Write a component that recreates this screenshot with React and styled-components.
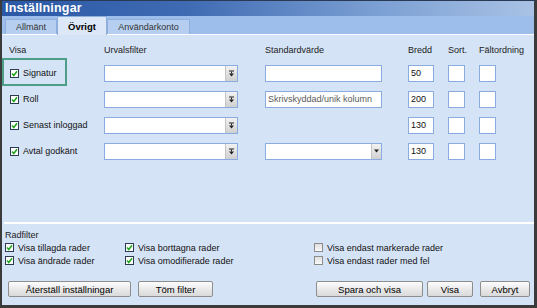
import React from 'react';
import styled, { createGlobalStyle } from 'styled-components';

const GlobalStyle = createGlobalStyle`
  body { margin: 0; font-family: "Liberation Sans", Arial, sans-serif; }
`;

const fields = [
  { name: 'Signatur', value: '50', focus: true, std: 'input' },
  { name: 'Roll', value: '200', std: 'readonly' },
  { name: 'Senast inloggad', value: '130', std: 'none' },
  { name: 'Avtal godkänt', value: '130', std: 'select' },
];

const rowFilters = [
  { label: 'Visa tillagda rader', checked: true },
  { label: 'Visa borttagna rader', checked: true },
  { label: 'Visa endast markerade rader', checked: false },
  { label: 'Visa ändrade rader', checked: true },
  { label: 'Visa omodifierade rader', checked: true },
  { label: 'Visa endast rader med fel', checked: false },
];

const Window = styled.div`
  width: 537px;
  height: 308px;
  box-sizing: border-box;
  border-left: 2px solid #3b3b3b;
  border-right: 3px solid #3b3b3b;
  border-bottom: 3px solid #3b3b3b;
  border-top: 1px solid #2a3a55;
  background: #d5e3f6;
  display: flex;
  flex-direction: column;
  font-size: 9px;
  color: #111;
`;

const TitleBar = styled.div`
  height: 15px;
  line-height: 15px;
  padding-left: 3px;
  background: linear-gradient(90deg, #2b58a6 0%, #3f6bb3 35%, #7a9fd3 70%, #a9c2e5 100%);
  color: #fff;
  font-weight: bold;
  font-size: 12.5px;
  letter-spacing: 0.2px;
`;

const TabStrip = styled.div`
  height: 18px;
  background: #9dbeea;
  border-bottom: 1px solid #ffffff;
  display: flex;
  align-items: flex-end;
  padding-left: 1px;
`;

const Tab = styled.div`
  height: ${p => (p.$active ? '19px' : '15px')};
  line-height: ${p => (p.$active ? '19px' : '15px')};
  width: ${p => p.$w}px;
  box-sizing: border-box;
  text-align: center;
  background: ${p => (p.$active ? '#dce8f7' : '#b6cff0')};
  border: 1px solid #8eaedb;
  border-bottom: none;
  font-weight: ${p => (p.$active ? 'bold' : 'normal')};
  font-size: ${p => (p.$active ? '9.5px' : '9px')};
  color: ${p => (p.$active ? '#000' : '#333')};
  margin-bottom: ${p => (p.$active ? '-1px' : '0')};
  position: relative;
`;

const Content = styled.div`
  flex: 1;
  display: flex;
  flex-direction: column;
`;

const FieldGrid = styled.div`
  display: grid;
  grid-template-columns: 95px 161px 143px 40px 31px auto;
  grid-template-rows: 20px;
  grid-auto-rows: 26px;
  align-items: center;
  padding: 5px 0 0 7px;
`;

const HeadCell = styled.div`
  color: #222;
`;

const Cell = styled.div`
  display: flex;
  align-items: center;
`;

const CheckLabel = styled.label`
  display: flex;
  align-items: center;
  gap: 4px;
  padding-left: 1px;
  position: relative;
  color: #111;
  &::before {
    content: '';
    display: ${p => (p.$focus ? 'block' : 'none')};
    position: absolute;
    left: -7px;
    top: -10px;
    right: -10px;
    bottom: -8px;
    border: 2px solid #4f9e88;
  }
`;

const Box = styled.span`
  width: 9px;
  height: 9px;
  box-sizing: border-box;
  border: 1px solid ${p => (p.$checked ? '#2d3b52' : '#8c8c8c')};
  background: ${p => (p.$checked ? '#fff' : 'linear-gradient(#dedede, #fafafa)')};
  display: inline-flex;
  align-items: center;
  justify-content: center;
  flex: none;
`;

const Field = styled.div`
  width: ${p => p.$w}px;
  height: 17px;
  box-sizing: border-box;
  border: 1px solid #89abdf;
  background: #fff;
  display: flex;
  align-items: center;
  padding-left: ${p => (p.$pad ? 2 : 0)}px;
  color: ${p => (p.$muted ? '#5a5a5a' : '#111')};
  overflow: hidden;
  white-space: nowrap;
`;

const DropButton = styled.span`
  margin-left: auto;
  width: ${p => p.$w}px;
  height: 15px;
  background: linear-gradient(#f2f2f2, #d0d0d0);
  border-left: 1px solid #c4c4c4;
  display: flex;
  align-items: center;
  justify-content: center;
`;

const Spacer = styled.div`
  flex: 1;
`;

const Separator = styled.div`
  height: 2px;
  background: #fff;
  margin-left: 2px;
`;

const FilterSection = styled.div`
  padding: 6px 0 0 3px;
`;

const SectionTitle = styled.div`
  height: 11px;
  line-height: 11px;
  color: #222;
`;

const FilterGrid = styled.div`
  display: grid;
  grid-template-columns: 120px 189px auto;
  grid-auto-rows: 13px;
  align-items: center;
`;

const FilterItem = styled.label`
  display: flex;
  align-items: center;
  gap: 4px;
  color: #111;
`;

const ButtonBar = styled.div`
  display: flex;
  align-items: center;
  padding: 14px 4px 8px 6px;
`;

const Button = styled.button`
  width: ${p => p.$w}px;
  height: 16px;
  margin-left: ${p => p.$ml || 0}px;
  padding: 0;
  box-sizing: border-box;
  border: 1px solid #8d8d8d;
  border-radius: 2px;
  background: linear-gradient(#fdfdfd, #e6e6e6 60%, #dadada);
  font-family: "Liberation Sans", Arial, sans-serif;
  font-size: 9.5px;
  color: #000;
`;

const CheckMark = () => (
  <svg width="7" height="7" viewBox="0 0 7 7">
    <polyline points="1,3.5 2.8,5.5 6,1.2" fill="none" stroke="#23a51f" strokeWidth="1.6" />
  </svg>
);

const CheckBox = ({ checked }) => <Box $checked={checked}>{checked && <CheckMark />}</Box>;

const ArrowToEnd = () => (
  <svg width="7" height="7" viewBox="0 0 7 7">
    <rect x="1" y="0.5" width="5" height="1" fill="#222" />
    <rect x="3" y="1.5" width="1" height="2" fill="#222" />
    <polygon points="1,3.5 6,3.5 3.5,6.5" fill="#222" />
  </svg>
);

const Arrow = () => (
  <svg width="5" height="4" viewBox="0 0 5 4">
    <polygon points="0,0.5 5,0.5 2.5,3.5" fill="#222" />
  </svg>
);

const Select = ({ w, small }) => (
  <Field $w={w}>
    <DropButton $w={small ? 9 : 11}>{small ? <Arrow /> : <ArrowToEnd />}</DropButton>
  </Field>
);

const App = () => {
  return (
    <Window>
      <GlobalStyle />
      <TitleBar>Inställningar</TitleBar>
      <TabStrip>
        <Tab $w={52} style={{ marginLeft: 2 }}>Allmänt</Tab>
        <Tab $w={50} $active>Övrigt</Tab>
        <Tab $w={83}>Användarkonto</Tab>
      </TabStrip>
      <Content>
        <FieldGrid>
          <HeadCell>Visa</HeadCell>
          <HeadCell>Urvalsfilter</HeadCell>
          <HeadCell>Standardvärde</HeadCell>
          <HeadCell>Bredd</HeadCell>
          <HeadCell>Sort.</HeadCell>
          <HeadCell>Fältordning</HeadCell>
          {fields.map(f => (
            <React.Fragment key={f.name}>
              <Cell>
                <CheckLabel $focus={f.focus}>
                  <CheckBox checked />
                  {f.name}
                </CheckLabel>
              </Cell>
              <Cell><Select w={134} /></Cell>
              <Cell>
                {f.std === 'input' && <Field $w={117} />}
                {f.std === 'readonly' && <Field $w={117} $pad $muted>Skrivskyddad/unik kolumn</Field>}
                {f.std === 'select' && <Select w={117} small />}
              </Cell>
              <Cell><Field $w={26} $pad>{f.value}</Field></Cell>
              <Cell><Field $w={17} /></Cell>
              <Cell><Field $w={17} /></Cell>
            </React.Fragment>
          ))}
        </FieldGrid>
        <Spacer />
        <Separator />
        <FilterSection>
          <SectionTitle>Radfilter</SectionTitle>
          <FilterGrid>
            {rowFilters.map(r => (
              <FilterItem key={r.label}>
                <CheckBox checked={r.checked} />
                {r.label}
              </FilterItem>
            ))}
          </FilterGrid>
        </FilterSection>
        <ButtonBar>
          <Button $w={123}>Återställ inställningar</Button>
          <Button $w={75} $ml={7}>Töm filter</Button>
          <Spacer />
          <Button $w={107}>Spara och visa</Button>
          <Button $w={46} $ml={4}>Visa</Button>
          <Button $w={50} $ml={7}>Avbryt</Button>
        </ButtonBar>
      </Content>
    </Window>
  );
};

export default App;
